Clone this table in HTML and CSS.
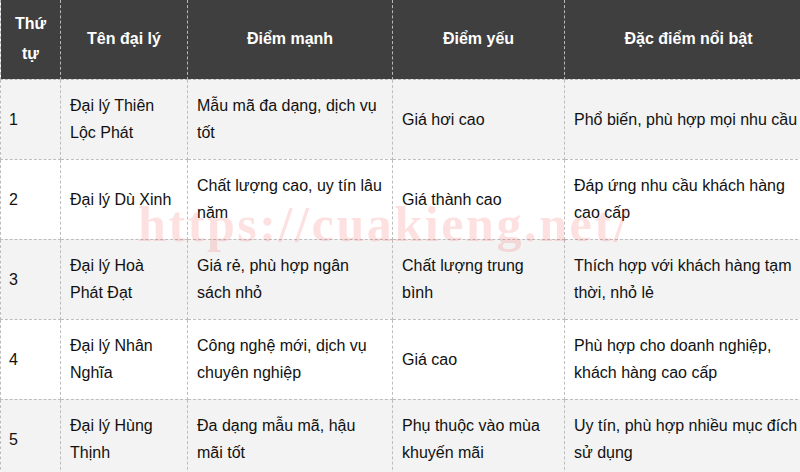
FILE: index.html
```html
<!DOCTYPE html>
<html lang="vi">
<head>
<meta charset="utf-8">
<link rel="stylesheet" href="styles.css">
</head>
<body>
<div class="wrap">
<table class="grid">
  <colgroup>
    <col class="c1"><col class="c2"><col class="c3"><col class="c4"><col class="c5">
  </colgroup>
  <thead>
    <tr><th>Thứ tự</th><th>Tên đại lý</th><th>Điểm mạnh</th><th>Điểm yếu</th><th>Đặc điểm nổi bật</th></tr>
  </thead>
  <tbody>
    <tr><td>1</td><td>Đại lý Thiên Lộc Phát</td><td>Mẫu mã đa dạng, dịch vụ tốt</td><td>Giá hơi cao</td><td>Phổ biến, phù hợp mọi nhu cầu</td></tr>
    <tr><td>2</td><td>Đại lý Dù Xinh</td><td>Chất lượng cao, uy tín lâu năm</td><td>Giá thành cao</td><td>Đáp ứng nhu cầu khách hàng cao cấp</td></tr>
    <tr><td>3</td><td>Đại lý Hoà Phát Đạt</td><td>Giá rẻ, phù hợp ngân sách nhỏ</td><td>Chất lượng trung bình</td><td>Thích hợp với khách hàng tạm thời, nhỏ lẻ</td></tr>
    <tr><td>4</td><td>Đại lý Nhân Nghĩa</td><td>Công nghệ mới, dịch vụ chuyên nghiệp</td><td>Giá cao</td><td>Phù hợp cho doanh nghiệp, khách hàng cao cấp</td></tr>
    <tr><td>5</td><td>Đại lý Hùng Thịnh</td><td>Đa dạng mẫu mã, hậu mãi tốt</td><td>Phụ thuộc vào mùa khuyến mãi</td><td>Uy tín, phù hợp nhiều mục đích sử dụng</td></tr>
  </tbody>
</table>
<div class="watermark">https://cuakieng.net/</div>
</div>
</body>
</html>
```
FILE: styles.css
```css
html, body { margin: 0; padding: 0; background: #fff; overflow: hidden; }
body { width: 800px; height: 472px; font-family: "Liberation Sans", Arial, sans-serif; }
.wrap { position: relative; width: 800px; height: 472px; overflow: hidden; }
.grid {
  border-collapse: collapse;
  table-layout: fixed;
  width: 812px;
  font-size: 16px;
  line-height: 27px;
  color: #111;
}
.c1 { width: 60px; }
.c2 { width: 127px; }
.c3 { width: 205px; }
.c4 { width: 172px; }
.c5 { width: 248px; }
.grid th {
  background: #3f3f3f;
  color: #fff;
  font-weight: bold;
  height: 79px;
  padding: 0 10px;
  text-align: center;
  vertical-align: middle;
  border: 1px dashed #b9b9b9;
  border-top: none;
  line-height: 30px;
  box-sizing: border-box;
}
.grid th:first-child { padding: 0 4px; }
.grid td {
  height: 80px;
  box-sizing: border-box;
  padding: 0 9px;
  vertical-align: middle;
  border: 1px dashed #bdbdbd;
}
.grid td:first-child { padding-left: 8px; }
.grid tbody tr:nth-child(odd) td { background: #f3f3f3; }
.grid tbody tr:nth-child(even) td { background: #fff; }
.watermark {
  position: absolute;
  left: 138px;
  top: 195px;
  font-family: "Liberation Serif", "Times New Roman", serif;
  font-weight: bold;
  font-size: 50px;
  letter-spacing: 2.6px;
  color: rgba(240, 60, 60, 0.16);
  pointer-events: none;
  white-space: nowrap;
}
```
